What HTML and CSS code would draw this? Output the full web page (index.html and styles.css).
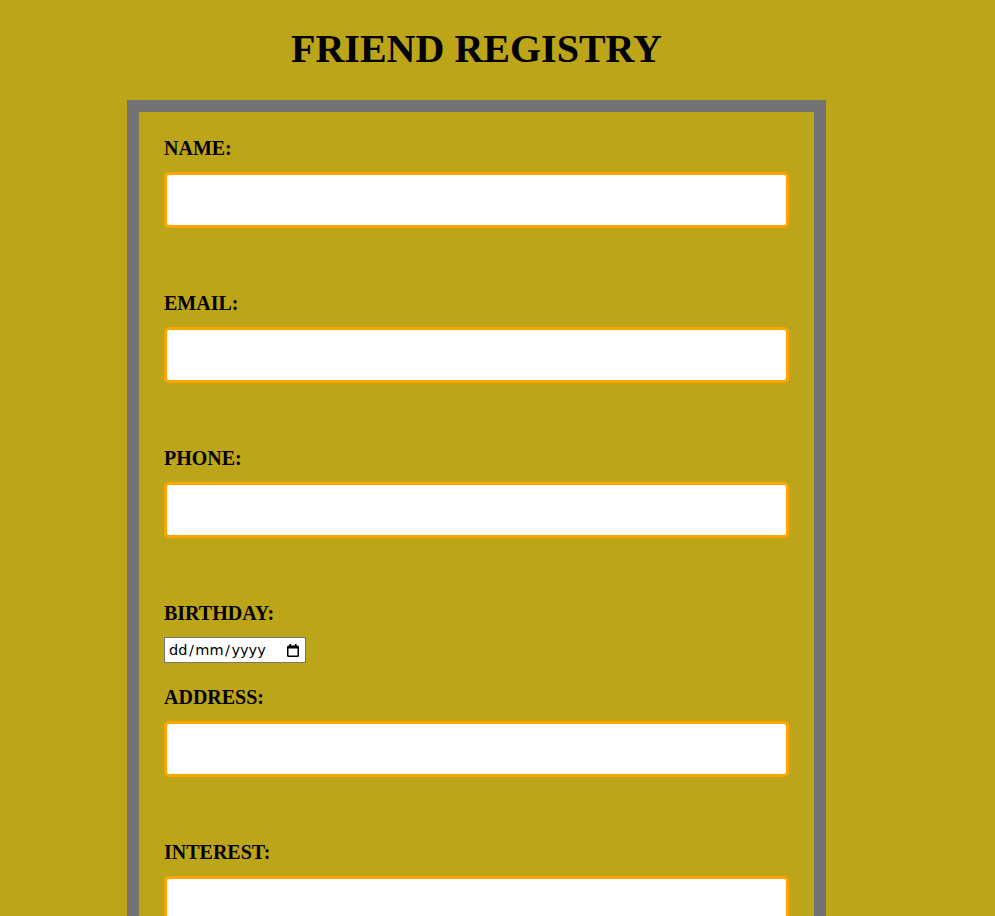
FILE: index.html
```html
<!DOCTYPE html>
<html>
<head>
<meta charset="utf-8">
<title>Friend Registry</title>
<link rel="stylesheet" href="styles.css">
</head>
<body>
<div class="page">
  <h1 class="title">FRIEND REGISTRY</h1>
  <form class="card">
    <label class="label" for="name">NAME:</label>
    <input class="text-input" type="text" id="name">
    <label class="label" for="email">EMAIL:</label>
    <input class="text-input" type="text" id="email">
    <label class="label" for="phone">PHONE:</label>
    <input class="text-input" type="text" id="phone">
    <label class="label" for="bday">BIRTHDAY:</label>
    <div class="date-input" id="bday" role="group" aria-label="Birthday">
      <span class="date-text">dd<span class="sep">/</span>mm<span class="sep">/</span>yyyy</span>
      <svg class="cal-icon" width="12" height="13" viewBox="0 0 12 13" aria-hidden="true">
        <rect x="2.5" y="0" width="1.6" height="2.5" fill="#000"/>
        <rect x="7.9" y="0" width="1.6" height="2.5" fill="#000"/>
        <path fill="#000" fill-rule="evenodd" d="M1.6 1.5h8.8A1.6 1.6 0 0 1 12 3.1v8.3a1.6 1.6 0 0 1-1.6 1.6H1.6A1.6 1.6 0 0 1 0 11.4V3.1A1.6 1.6 0 0 1 1.6 1.5zM1.5 4.6v6.9h9V4.6z"/>
      </svg>
    </div>
    <label class="label" for="address">ADDRESS:</label>
    <input class="text-input" type="text" id="address">
    <label class="label" for="interest">INTEREST:</label>
    <input class="text-input" type="text" id="interest">
  </form>
</div>
</body>
</html>
```

FILE: styles.css
```css
html, body {
  margin: 0;
  padding: 0;
  background: #bda51a;
}
.page {
  width: 699px;
  margin-left: 127px;
  font-family: "Liberation Serif", "Times New Roman", serif;
  color: #000;
}
.title {
  margin: 26px 0 0;
  font-size: 40px;
  font-weight: bold;
  line-height: 46px;
  text-align: center;
}
.card {
  margin-top: 28px;
  border: 12px solid #737373;
  padding: 26px 25px 40px;
  display: flex;
  flex-direction: column;
  align-items: flex-start;
}
.label {
  display: block;
  font-size: 20px;
  font-weight: bold;
  line-height: 21px;
  margin-bottom: 13px;
}
.text-input {
  display: block;
  box-sizing: border-box;
  width: 100%;
  height: 56px;
  margin: 0 0 65px;
  border: 3px solid #ffa500;
  border-radius: 5px;
  background: #fff;
  outline: none;
}
.date-input {
  box-sizing: border-box;
  width: 142px;
  height: 26px;
  margin: 0 0 24px;
  padding: 0 6px 0 4px;
  border: 1px solid #767676;
  background: #fff;
  display: flex;
  align-items: center;
  justify-content: space-between;
}
.date-text {
  font-family: "DejaVu Sans", "Noto Sans", sans-serif;
  font-size: 14.5px;
  color: #000;
  line-height: 1;
  margin-top: 1px;
}
.sep {
  padding: 0 1.5px;
}
.cal-icon {
  display: block;
  margin-top: 1px;
}
```
